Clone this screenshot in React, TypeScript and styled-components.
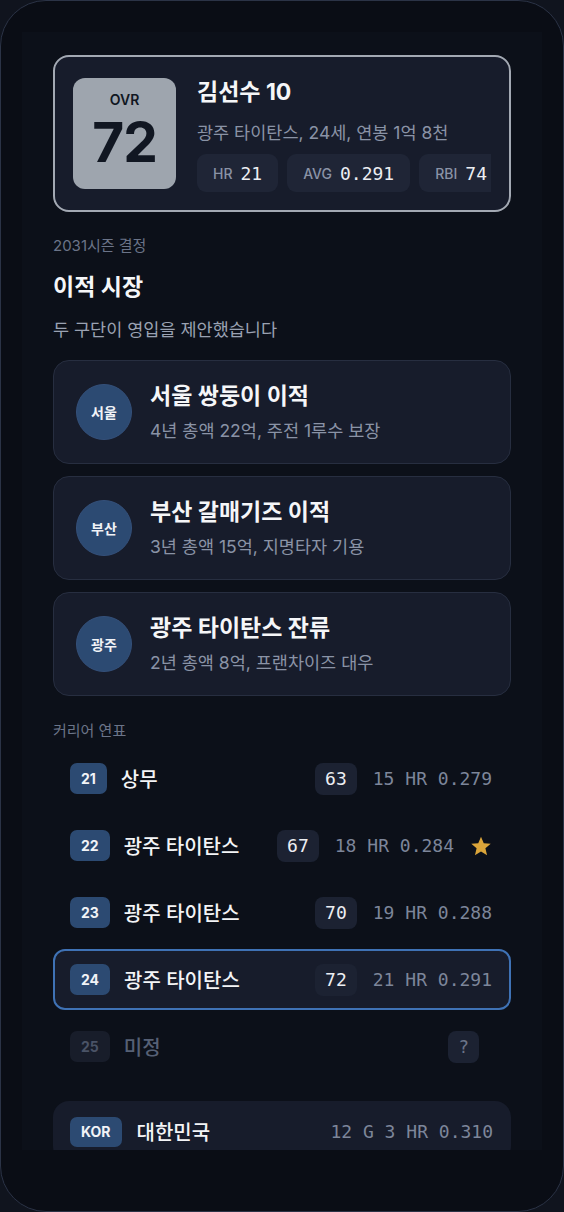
import React from "react";
import styled, { createGlobalStyle } from "styled-components";

const GlobalStyle = createGlobalStyle`
  html, body {
    margin: 0;
    padding: 0;
    background: #10141e;
  }
  body {
    font-family: Inter, "Noto Sans CJK KR", sans-serif;
    color: #f3f4f6;
  }
  * {
    box-sizing: border-box;
  }
`;

const MONO = `"DejaVu Sans Mono", "Liberation Mono", monospace`;

const Phone = styled.div`
  width: 564px;
  height: 1212px;
  border: 1px solid #2b3346;
  border-radius: 46px;
  background: #0a0d15;
  padding: 31px 21px 0;
  overflow: hidden;
`;

const Screen = styled.div`
  height: 1118px;
  background: #0c1019;
  padding: 23px 31px 0;
  overflow: hidden;
`;

const PlayerCard = styled.div`
  height: 157px;
  display: flex;
  align-items: flex-start;
  gap: 21px;
  padding: 21px 18px;
  border: 2px solid #a3a9b3;
  border-radius: 16px;
  background: #171c2b;
`;

const OvrBox = styled.div`
  width: 103px;
  height: 111px;
  flex-shrink: 0;
  border-radius: 12px;
  background: #9ea5ae;
  color: #111722;
  display: flex;
  flex-direction: column;
  align-items: center;
  padding-top: 14px;
  gap: 6px;
`;

const OvrLabel = styled.div`
  font-size: 14px;
  font-weight: 600;
  line-height: 16px;
`;

const OvrValue = styled.div`
  font-size: 55px;
  font-weight: 700;
  line-height: 56px;
  letter-spacing: -1px;
`;

const Info = styled.div`
  flex: 1;
  min-width: 0;
  overflow: hidden;
`;

const Name = styled.div`
  font-size: 23px;
  font-weight: 700;
  line-height: 28px;
  color: #f5f6f8;
`;

const Meta = styled.div`
  margin-top: 16px;
  font-size: 17.5px;
  line-height: 22px;
  color: #8a93a6;
  white-space: nowrap;
`;

const Chips = styled.div`
  margin-top: 10px;
  display: flex;
  gap: 9px;
`;

const StatChip = styled.div`
  flex-shrink: 0;
  height: 38px;
  padding: 0 16px;
  border-radius: 9px;
  background: #1f2536;
  display: flex;
  align-items: center;
  gap: 8px;
`;

const StatLabel = styled.span`
  font-size: 14px;
  font-weight: 500;
  color: #8a93a6;
`;

const StatValue = styled.span`
  font-family: ${MONO};
  font-size: 18px;
  color: #eceef2;
`;

const Eyebrow = styled.div<{ $gap: number }>`
  margin-top: ${(p) => p.$gap}px;
  font-size: 15px;
  line-height: 18px;
  color: #6b7488;
`;

const Title = styled.h2`
  margin: 18px 0 0;
  font-size: 23px;
  font-weight: 700;
  line-height: 28px;
  color: #f5f6f8;
`;

const Lead = styled.p`
  margin: 18px 0 0;
  font-size: 17.5px;
  line-height: 22px;
  color: #9aa2b2;
`;

const Options = styled.div`
  margin-top: 19px;
  display: flex;
  flex-direction: column;
  gap: 12px;
`;

const OptionCard = styled.div`
  height: 104px;
  display: flex;
  align-items: center;
  gap: 18px;
  padding: 0 22px;
  border: 1px solid #272e40;
  border-radius: 16px;
  background: #171c2b;
`;

const TeamCircle = styled.div`
  width: 56px;
  height: 56px;
  flex-shrink: 0;
  border-radius: 50%;
  background: #2c4a72;
  border: 1px solid #34507a;
  display: flex;
  align-items: center;
  justify-content: center;
  font-size: 14px;
  font-weight: 600;
  color: #f1f3f7;
`;

const OptionTitle = styled.div`
  font-size: 23px;
  font-weight: 700;
  line-height: 28px;
  color: #f5f6f8;
`;

const OptionSub = styled.div`
  margin-top: 10px;
  font-size: 17.5px;
  line-height: 22px;
  color: #8a93a6;
`;

const Timeline = styled.div`
  margin-top: 8px;
  display: flex;
  flex-direction: column;
  gap: 6px;
`;

const Row = styled.div<{ $current?: boolean }>`
  height: 61px;
  display: flex;
  align-items: center;
  padding: 0 17px 0 15px;
  border: 2px solid ${(p) => (p.$current ? "#3f72b5" : "transparent")};
  border-radius: 12px;
  background: ${(p) => (p.$current ? "#171c2b" : "transparent")};
`;

const AgeBadge = styled.div<{ $dim?: boolean }>`
  height: 31px;
  padding: 0 11px;
  border-radius: 7px;
  margin-right: 14px;
  display: flex;
  align-items: center;
  font-size: 14px;
  font-weight: 700;
  background: ${(p) => (p.$dim ? "#181d2a" : "#2c4a72")};
  color: ${(p) => (p.$dim ? "#4a5366" : "#f1f3f7")};
`;

const Team = styled.div<{ $dim?: boolean }>`
  flex: 1;
  font-size: 20px;
  font-weight: 500;
  color: ${(p) => (p.$dim ? "#566075" : "#f3f4f6")};
`;

const OvrChip = styled.div<{ $dim?: boolean }>`
  height: 32px;
  padding: 0 10px;
  border-radius: 8px;
  margin-right: ${(p) => (p.$dim ? 13 : 16)}px;
  background: #1c2232;
  display: flex;
  align-items: center;
  font-family: ${MONO};
  font-size: 18px;
  color: ${(p) => (p.$dim ? "#6b7488" : "#eceef2")};
`;

const Line = styled.div`
  font-family: ${MONO};
  font-size: 18px;
  color: #7d869a;
  white-space: nowrap;
`;

const Star = styled.svg`
  margin-left: 16px;
  width: 22px;
  height: 22px;
  flex-shrink: 0;
`;

const NationCard = styled.div`
  margin-top: 24px;
  height: 61px;
  display: flex;
  align-items: center;
  padding: 0 18px 0 17px;
  border-radius: 16px;
  background: #171c2b;
`;

const NationBadge = styled(AgeBadge)`
  height: 30px;
  margin-right: 15px;
`;

const offers = [
  { short: "서울", title: "서울 쌍둥이 이적", sub: "4년 총액 22억, 주전 1루수 보장" },
  { short: "부산", title: "부산 갈매기즈 이적", sub: "3년 총액 15억, 지명타자 기용" },
  { short: "광주", title: "광주 타이탄스 잔류", sub: "2년 총액 8억, 프랜차이즈 대우" },
];

const seasons = [
  { age: 21, team: "상무", ovr: "63", line: "15 HR 0.279" },
  { age: 22, team: "광주 타이탄스", ovr: "67", line: "18 HR 0.284", star: true },
  { age: 23, team: "광주 타이탄스", ovr: "70", line: "19 HR 0.288" },
  { age: 24, team: "광주 타이탄스", ovr: "72", line: "21 HR 0.291", current: true },
  { age: 25, team: "미정", ovr: "?", line: "", dim: true },
];

export default function App() {
  return (
    <>
      <GlobalStyle />
      <Phone>
        <Screen>
          <PlayerCard>
            <OvrBox>
              <OvrLabel>OVR</OvrLabel>
              <OvrValue>72</OvrValue>
            </OvrBox>
            <Info>
              <Name>김선수 10</Name>
              <Meta>광주 타이탄스, 24세, 연봉 1억 8천</Meta>
              <Chips>
                <StatChip>
                  <StatLabel>HR</StatLabel>
                  <StatValue>21</StatValue>
                </StatChip>
                <StatChip>
                  <StatLabel>AVG</StatLabel>
                  <StatValue>0.291</StatValue>
                </StatChip>
                <StatChip>
                  <StatLabel>RBI</StatLabel>
                  <StatValue>74</StatValue>
                </StatChip>
              </Chips>
            </Info>
          </PlayerCard>

          <Eyebrow $gap={25}>2031시즌 결정</Eyebrow>
          <Title>이적 시장</Title>
          <Lead>두 구단이 영입을 제안했습니다</Lead>

          <Options>
            {offers.map((o) => (
              <OptionCard key={o.short}>
                <TeamCircle>{o.short}</TeamCircle>
                <div>
                  <OptionTitle>{o.title}</OptionTitle>
                  <OptionSub>{o.sub}</OptionSub>
                </div>
              </OptionCard>
            ))}
          </Options>

          <Eyebrow $gap={26}>커리어 연표</Eyebrow>
          <Timeline>
            {seasons.map((s) => (
              <Row key={s.age} $current={s.current}>
                <AgeBadge $dim={s.dim}>{s.age}</AgeBadge>
                <Team $dim={s.dim}>{s.team}</Team>
                <OvrChip $dim={s.dim}>{s.ovr}</OvrChip>
                <Line>{s.line}</Line>
                {s.star && (
                  <Star viewBox="0 0 24 24">
                    <path
                      d="M12 1.8l3 7.1 7.6.6-5.8 5 1.8 7.5L12 18l-6.6 4 1.8-7.5-5.8-5 7.6-.6z"
                      fill="#dba53a"
                    />
                  </Star>
                )}
              </Row>
            ))}
          </Timeline>

          <NationCard>
            <NationBadge>KOR</NationBadge>
            <Team>대한민국</Team>
            <Line>12 G 3 HR 0.310</Line>
          </NationCard>
        </Screen>
      </Phone>
    </>
  );
}
